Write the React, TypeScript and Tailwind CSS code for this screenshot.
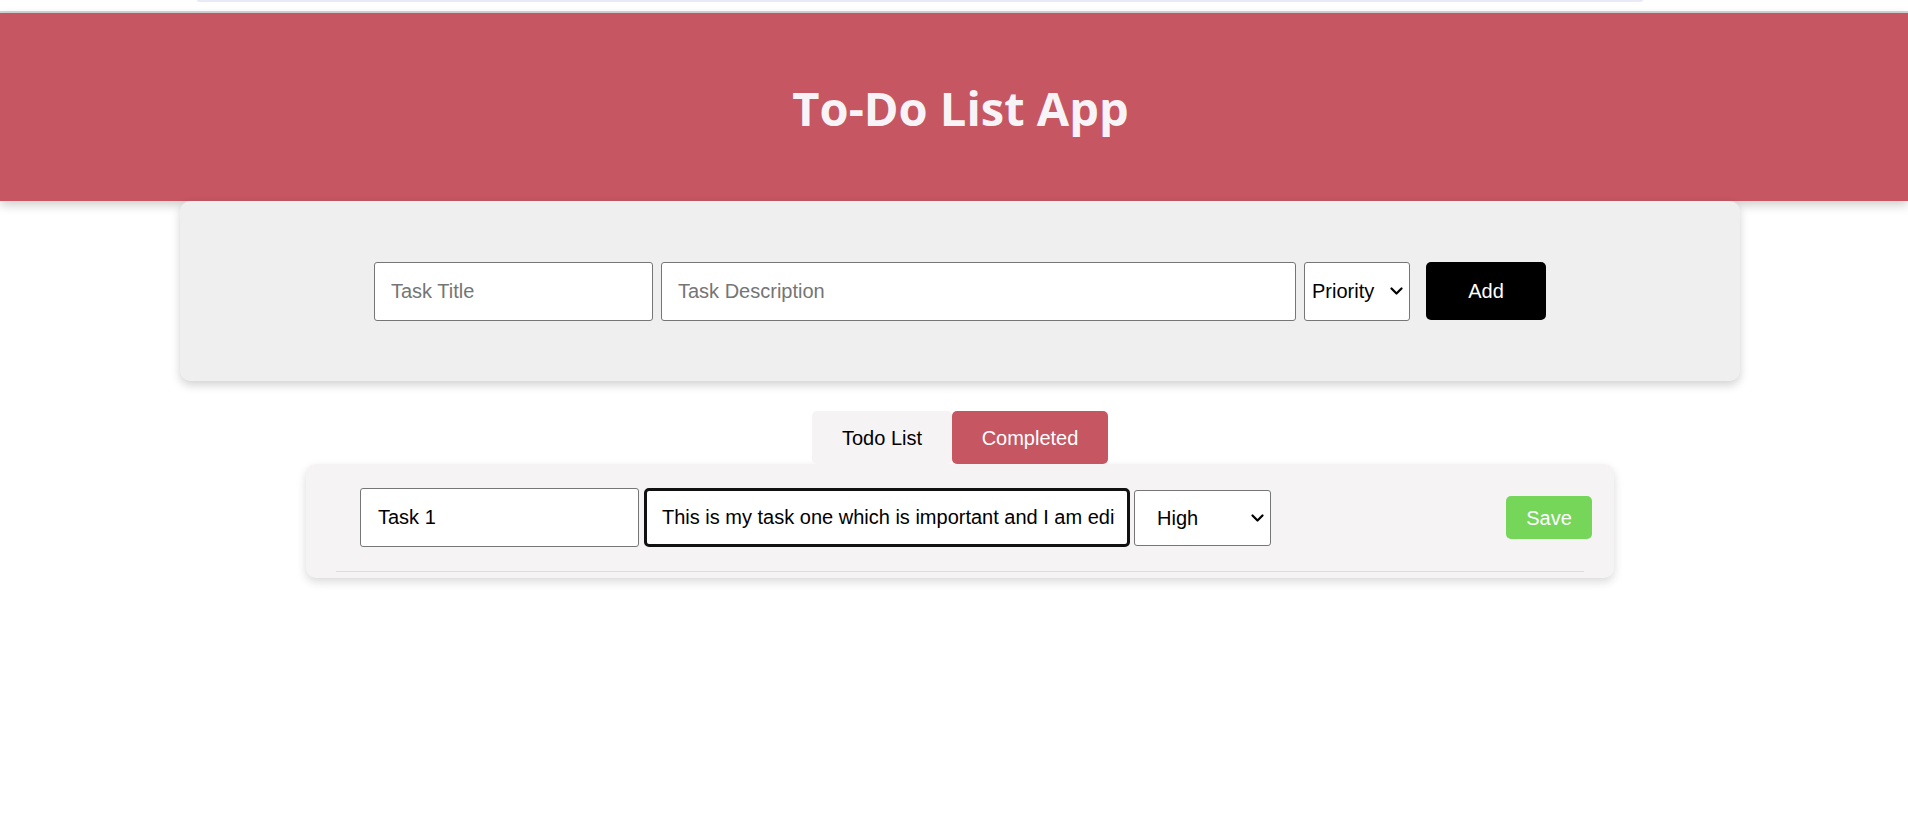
import React from "react";

function Chevron() {
  return (
    <svg
      width="13"
      height="8"
      viewBox="0 0 13 8"
      className="pointer-events-none absolute right-[7px] top-1/2 -translate-y-1/2"
    >
      <path
        d="M1.5 1.5 L6.5 6.5 L11.5 1.5"
        stroke="#000"
        strokeWidth="2.2"
        fill="none"
        strokeLinecap="round"
        strokeLinejoin="round"
      />
    </svg>
  );
}

export default function App() {
  return (
    <div className="min-h-[840px] w-full overflow-hidden bg-white font-['Liberation_Sans',Arial,sans-serif] text-black">
      <div className="h-[11px] bg-white">
        <div className="ml-[197px] mr-[265px] h-[2px] rounded-b-full bg-[#e8ebf7]" />
      </div>
      <div className="h-[2px] bg-[#d4d4d4]" />
      <header className="flex h-[188px] items-center justify-center bg-[#c55662] shadow-[0_4px_10px_rgba(0,0,0,0.2)]">
        <h1 className="ml-[13px] pt-[3px] font-['Open_Sans',sans-serif] text-[47px] font-bold text-[#f8f3f6]">
          To-Do List App
        </h1>
      </header>

      <div className="w-[1920px]">
        <div className="ml-[180px] flex h-[180px] w-[1560px] items-center justify-center rounded-[10px] bg-[#efefef] shadow-[0_4px_10px_rgba(0,0,0,0.18)]">
          <input
            type="text"
            placeholder="Task Title"
            className="h-[59px] w-[279px] rounded-[3px] border border-[#767676] bg-white pl-[16px] text-[20px] outline-none placeholder:text-[#757575]"
          />
          <input
            type="text"
            placeholder="Task Description"
            className="ml-[8px] h-[59px] w-[635px] rounded-[3px] border border-[#767676] bg-white pl-[16px] text-[20px] outline-none placeholder:text-[#757575]"
          />
          <div className="relative ml-[8px]">
            <select
              defaultValue=""
              className="h-[59px] w-[106px] appearance-none rounded-[3px] border border-[#767676] bg-white pl-[7px] text-[20px] text-black outline-none"
            >
              <option value="">Priority</option>
              <option value="high">High</option>
              <option value="medium">Medium</option>
              <option value="low">Low</option>
            </select>
            <Chevron />
          </div>
          <button className="ml-[16px] h-[58px] w-[120px] rounded-[5px] bg-black text-[20px] text-white">
            Add
          </button>
        </div>

        <div className="mt-[30px] flex justify-center">
          <button className="flex h-[53px] w-[140px] items-center justify-center rounded-[5px] bg-[#f5f3f4] text-[20px] text-black">
            Todo List
          </button>
          <button className="flex h-[53px] w-[156px] items-center justify-center rounded-[5px] bg-[#c55662] text-[20px] text-white">
            Completed
          </button>
        </div>

        <div className="mx-auto w-[1308px] rounded-[10px] bg-[#f5f3f4] px-[30px] pb-[6px] pt-[24px] shadow-[0_4px_10px_rgba(0,0,0,0.15)]">
          <div className="flex items-center border-b border-[#dddddd] pb-[24px] pl-[24px]">
            <input
              type="text"
              defaultValue="Task 1"
              className="h-[59px] w-[279px] rounded-[3px] border border-[#767676] bg-white pl-[17px] text-[20px] outline-none"
            />
            <input
              type="text"
              defaultValue="This is my task one which is important and I am editing it"
              className="ml-[5px] h-[59px] w-[486px] rounded-[5px] border-[3px] border-[#111111] bg-white pl-[15px] pr-[12px] text-[20px] outline-none"
            />
            <div className="relative ml-[4px]">
              <select
                defaultValue="high"
                className="h-[56px] w-[137px] appearance-none rounded-[3px] border border-[#767676] bg-white pl-[22px] text-[20px] text-black outline-none"
              >
                <option value="high">High</option>
                <option value="medium">Medium</option>
                <option value="low">Low</option>
              </select>
              <Chevron />
            </div>
            <button className="-mr-[8px] ml-auto h-[43px] w-[86px] rounded-[5px] bg-[#76d659] text-[20px] text-white">
              Save
            </button>
          </div>
        </div>
      </div>
    </div>
  );
}
